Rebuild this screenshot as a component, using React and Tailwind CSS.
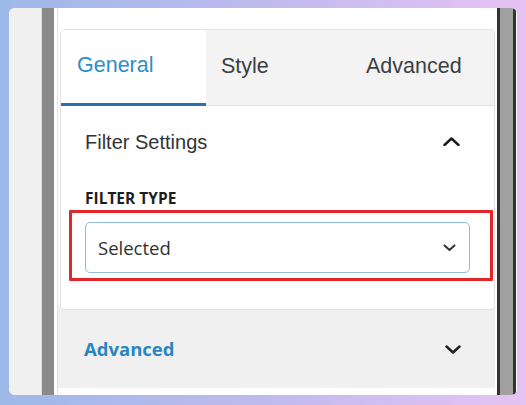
export default function App() {
  const sans = "font-['Liberation_Sans',Arial,sans-serif]";
  const open = "font-['Open_Sans','Noto_Sans',sans-serif]";
  return (
    <div className="w-[526px] h-[405px] bg-gradient-to-r from-[#9db9e8] via-[#bfbaee] to-[#e6c3f3] pt-[8px] pl-[9px] pr-[9px] pb-[10px]">
      <div className="flex h-full bg-white rounded-[6px] overflow-hidden">
        <div className="w-[32px] bg-[#f0f0f0]" />
        <div className="w-[1px] bg-[#dcdcdc]" />
        <div className="w-[12px] bg-[#8a8a8a]" />
        <div className="w-[3px] bg-white" />
        <div className="w-[1px] bg-[#e3e3e3]" />
        <div className="w-[437px] flex flex-col pt-[21px]">
          <div className="relative z-10 ml-[2px] h-[281px] border border-[#e2e2e2] rounded-[4px] bg-white overflow-hidden">
            <div className="flex h-[76px]">
              <div className={`w-[145px] flex items-center pl-[16px] pb-[3px] bg-white border-b-[3px] border-[#2372b3] text-[21.5px] text-[#2f8dcc] ${sans}`}>
                General
              </div>
              <div className={`w-[145px] flex items-center pl-[15px] pb-[3px] bg-[#f3f3f3] border-b border-[#e0e0e0] text-[21.5px] text-[#3c3f44] ${sans}`}>
                Style
              </div>
              <div className={`flex-1 flex items-center pl-[15px] pb-[3px] bg-[#f3f3f3] border-b border-[#e0e0e0] text-[21.5px] text-[#3c3f44] ${sans}`}>
                Advanced
              </div>
            </div>
            <div className="px-[24px]">
              <div className="h-[71px] flex items-center justify-between">
                <span className={`text-[20px] text-[#333333] ${sans}`}>Filter Settings</span>
                <svg width="17" height="9" viewBox="0 0 17 9" className="mr-[10px]" fill="none">
                  <path d="M1.5 8 L8.5 1.5 L15.5 8" stroke="#1e1e1e" strokeWidth="2.5" strokeLinecap="round" strokeLinejoin="round" />
                </svg>
              </div>
              <div className={`mt-[11px] h-[20px] leading-[20px] text-[15.5px] font-bold text-[#1e1e1e] ${open}`}>
                FILTER TYPE
              </div>
              <div className="mt-[14px] h-[51px] border border-[#8fbedb] rounded-[5px] flex items-center justify-between pl-[12px] pr-[13px]">
                <span className={`text-[18.5px] text-[#2c3338] ${open}`}>Selected</span>
                <svg width="13" height="8" viewBox="0 0 13 8" fill="none">
                  <path d="M1.5 1.5 L6.5 6 L11.5 1.5" stroke="#2c3338" strokeWidth="2" strokeLinecap="round" strokeLinejoin="round" />
                </svg>
              </div>
            </div>
            <div className="absolute left-[8px] top-[180px] w-[424px] h-[71px] border-[3px] border-[#e3262a] rounded-[1px]" />
          </div>
          <div className="-mt-[5px] pt-[5px] h-[83px] bg-[#f0f0f0] flex items-center justify-between pl-[26px] pr-[34px]">
            <span className={`text-[18.5px] font-bold text-[#2a86c2] ${open}`}>Advanced</span>
            <svg width="16" height="9" viewBox="0 0 16 9" fill="none">
              <path d="M1.5 1.5 L8 7.5 L14.5 1.5" stroke="#222222" strokeWidth="2.5" strokeLinecap="round" strokeLinejoin="round" />
            </svg>
          </div>
        </div>
        <div className="w-[2px] bg-white" />
        <div className="w-[3px] bg-[#333333]" />
        <div className="w-[13px] bg-[#a0a0a0]" />
        <div className="w-[3px] bg-[#333333]" />
        <div className="w-[1px] bg-white" />
      </div>
    </div>
  );
}
